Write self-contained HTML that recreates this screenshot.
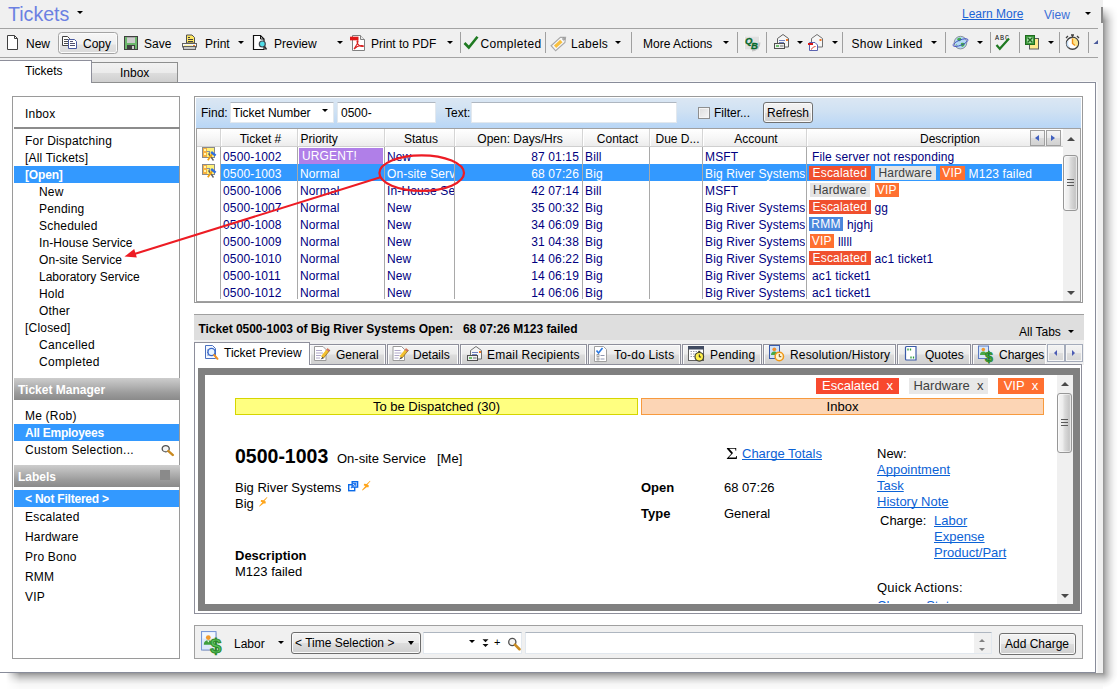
<!DOCTYPE html>
<html>
<head>
<meta charset="utf-8">
<title>Tickets</title>
<style>
html,body{margin:0;padding:0;background:#fff;}
body{width:1119px;height:689px;overflow:hidden;position:relative;font-family:"Liberation Sans",sans-serif;font-size:12px;color:#000;}
.abs{position:absolute;}
#win{position:absolute;left:0;top:0;width:1103px;height:673px;background:#f0f0f0;overflow:hidden;}
.t{position:absolute;white-space:nowrap;line-height:14px;height:14px;}
.vsep{position:absolute;width:1px;background:#a0a0a0;top:32px;height:21px;}
.dd{position:absolute;width:0;height:0;margin-left:.3px;border-left:3.2px solid transparent;border-right:3.2px solid transparent;border-top:3.7px solid #000;}
.lp{position:absolute;left:25px;white-space:nowrap;line-height:14px;height:14px;letter-spacing:.2px;}
.lp.i{left:39px;}
.sel{position:absolute;left:14px;width:165px;background:#3399ff;}
.hdr{position:absolute;left:14px;width:166px;background:linear-gradient(#cdcdcd,#b4b4b4 35%,#9a9a9a 70%,#8a8a8a);color:#fff;font-weight:bold;}
.inp{box-sizing:border-box;background:#fff;border:1px solid #e2e8ee;border-top-color:#aeb6c0;}
.btn{box-sizing:border-box;border:1px solid #707070;border-radius:3px;background:linear-gradient(#f3f3f3,#ebebeb 50%,#dddddd 51%,#cfcfcf);box-shadow:inset 0 0 0 1px #fafafa;}
.ctr{text-align:center;padding-left:3px;box-sizing:border-box;}
.hs{top:129px;width:1px;height:17px;background:#d5d5d5;box-shadow:1px 0 0 #fff;}
.g{color:#000080;letter-spacing:.14px;}
.g.s{color:#fff;}
.tag{display:inline-block;height:14px;line-height:14px;padding:0;text-align:center;margin-right:4px;vertical-align:top;margin-top:-1px;letter-spacing:.2px;}
.tE{width:61.5px;}.tH{width:60.5px;margin-left:.5px;}.tV{width:24.5px;margin-left:.5px;}.tR{width:34px;}
.tE{background:#f0502e;color:#fff;}
.tH{background:#e4e4e4;color:#404040;}
.tV{background:#ff7030;color:#fff;}
.tR{background:#4a87dc;color:#fff;}
.sbtn{box-sizing:border-box;border:1px solid #a0a0a0;background:linear-gradient(#f6f6f6,#e9e9e9 50%,#dcdcdc 51%,#d2d2d2);}
.thumb{box-sizing:border-box;border:1px solid #979797;border-radius:3px;background:linear-gradient(90deg,#f6f6f6 0,#ededed 35%,#dadada 52%,#c6c6c6 85%,#d2d2d2);box-shadow:inset 0 0 0 1px rgba(255,255,255,.5);}
.dtab{top:344px;height:20px;box-sizing:border-box;border:1px solid #8e8f9b;border-bottom:none;background:linear-gradient(#f3f3f3,#ebebeb 48%,#dddddd 52%,#d0d0d0);box-shadow:inset 1px 1px 0 #fbfbfb,inset -1px 0 0 #fbfbfb;}
.navb{top:344px;width:18px;height:18px;box-sizing:border-box;border:1px solid #a4abba;background:linear-gradient(#f3f3f3,#ececec 48%,#dedede 52%,#d6d6d6);box-shadow:inset 0 0 0 1px #f6f6f6;}
.ptag{height:16px;line-height:16px;text-align:center;white-space:nowrap;}
.p{font-size:13px;line-height:16px;height:16px;}
a{color:#0b62d6;text-decoration:underline;text-decoration-skip-ink:none;}
</style>
</head>
<body>
<div id="win">

<!-- ===== title bar ===== -->
<div class="t" style="left:8px;top:2px;font-size:19.6px;line-height:24px;height:24px;color:#6b80e2;">Tickets</div>
<div class="dd" style="left:77px;top:11px;"></div>
<div class="t" style="left:962px;top:7px;color:#1a63d6;text-decoration:underline;">Learn More</div>
<div class="t" style="left:1044px;top:8px;color:#3a6fd8;">View</div>
<div class="dd" style="left:1085px;top:12px;"></div>
<div class="abs" style="left:0;top:28px;width:1098px;height:1px;background:#a3a3a3;"></div>
<div class="abs" style="left:0;top:57px;width:1098px;height:1px;background:#a3a3a3;"></div>

<!-- ===== toolbar ===== -->
<div id="tb">
<div class="t" style="left:26px;top:37px;">New</div>
<div class="abs" style="left:58px;top:32px;width:60px;height:22px;border:1px solid #a4a4a4;border-radius:3.5px;background:linear-gradient(#f6f6f6,#f0f0f0 55%,#e2e2e2 60%,#dadada);box-shadow:inset 0 0 0 1px #fbfbfb;box-sizing:border-box;"></div>
<div class="t" style="left:83px;top:37px;">Copy</div>
<div class="t" style="left:144px;top:37px;">Save</div>
<div class="t" style="left:205px;top:37px;">Print</div>
<div class="dd" style="left:237.8px;top:41px;"></div>
<div class="t" style="left:274px;top:37px;">Preview</div>
<div class="dd" style="left:337px;top:41px;"></div>
<div class="t" style="left:371px;top:37px;">Print to PDF</div>
<div class="dd" style="left:447px;top:41px;"></div>
<div class="vsep" style="left:460px;"></div>
<div class="t" style="left:480.5px;top:37px;letter-spacing:.33px;">Completed</div>
<div class="vsep" style="left:545px;"></div>
<div class="t" style="left:571px;top:37px;letter-spacing:.3px;">Labels</div>
<div class="dd" style="left:615px;top:41px;"></div>
<div class="vsep" style="left:631px;"></div>
<div class="t" style="left:643px;top:37px;">More Actions</div>
<div class="dd" style="left:723px;top:41px;"></div>
<div class="vsep" style="left:737px;"></div>
<div class="vsep" style="left:766px;"></div>
<div class="dd" style="left:797px;top:41px;"></div>
<div class="dd" style="left:832px;top:41px;"></div>
<div class="vsep" style="left:842px;"></div>
<div class="t" style="left:851.5px;top:37px;letter-spacing:.23px;">Show Linked</div>
<div class="dd" style="left:931px;top:41px;"></div>
<div class="vsep" style="left:945px;"></div>
<div class="dd" style="left:977px;top:41px;"></div>
<div class="vsep" style="left:990px;"></div>
<div class="vsep" style="left:1019px;"></div>
<div class="dd" style="left:1048px;top:41px;"></div>
<div class="vsep" style="left:1059px;"></div>
<div class="vsep" style="left:1088px;"></div>
</div>

<!-- ===== main tabs + white page ===== -->
<div class="abs" style="left:0;top:82px;width:1096px;height:591px;background:#fff;border:1px solid #888c9a;border-left:none;box-sizing:border-box;box-shadow:1.5px 0 0 #fbfbfb,0 -1px 0 #f8f8f8;"></div>
<div class="abs" style="left:91px;top:62px;width:87px;height:21px;box-sizing:border-box;border:1px solid #8e8f8f;background:linear-gradient(#f2f2f2,#ebebeb 50%,#dddddd 51%,#cfcfcf);"></div>
<div class="t" style="left:120px;top:66px;">Inbox</div>
<div class="abs" style="left:0;top:60px;width:92px;height:23px;box-sizing:border-box;border-top:1px solid #8e8f9b;border-right:1px solid #8e8f9b;background:#fff;"></div>
<div class="t" style="left:25px;top:64px;">Tickets</div>

<!-- ===== left panel ===== -->
<div id="left">
<div class="abs" style="left:12px;top:96px;width:168px;height:563px;box-sizing:border-box;border:1px solid #9a9a9a;background:#fff;"></div>
<div class="lp" style="top:107px;">Inbox</div>
<div class="abs" style="left:14px;top:127px;width:166px;height:2px;background:#8c8c8c;"></div>
<div class="lp" style="top:134px;">For Dispatching</div>
<div class="lp" style="top:151px;">[All Tickets]</div>
<div class="sel" style="top:166px;height:17px;"></div>
<div class="lp" style="top:168px;color:#fff;font-weight:bold;letter-spacing:-.17px;">[Open]</div>
<div class="lp i" style="top:185px;">New</div>
<div class="lp i" style="top:202px;">Pending</div>
<div class="lp i" style="top:219px;">Scheduled</div>
<div class="lp i" style="top:236px;letter-spacing:0.1px;">In-House Service</div>
<div class="lp i" style="top:253px;letter-spacing:0.06px;">On-site Service</div>
<div class="lp i" style="top:270px;letter-spacing:0px;">Laboratory Service</div>
<div class="lp i" style="top:287px;">Hold</div>
<div class="lp i" style="top:304px;">Other</div>
<div class="lp" style="top:321px;">[Closed]</div>
<div class="lp i" style="top:338px;letter-spacing:0.3px;">Cancelled</div>
<div class="lp i" style="top:355px;letter-spacing:0.3px;">Completed</div>

<div class="hdr" style="top:378px;height:22px;"></div>
<div class="t" style="left:18px;top:383px;color:#fff;font-weight:bold;">Ticket Manager</div>
<div class="lp" style="top:409px;">Me (Rob)</div>
<div class="sel" style="top:424px;height:17px;"></div>
<div class="lp" style="top:426px;color:#fff;font-weight:bold;letter-spacing:-.24px;">All Employees</div>
<div class="lp" style="top:443px;letter-spacing:.25px;">Custom Selection...</div>

<div class="hdr" style="top:465px;height:22px;"></div>
<div class="t" style="left:18px;top:470px;color:#fff;font-weight:bold;">Labels</div>
<div class="abs" style="left:160px;top:470px;width:10px;height:10px;background:#8a8a8a;"></div>
<div class="sel" style="top:490px;height:17px;"></div>
<div class="lp" style="top:492px;color:#fff;font-weight:bold;letter-spacing:-.22px;">&lt; Not Filtered &gt;</div>
<div class="lp" style="top:510px;">Escalated</div>
<div class="lp" style="top:530px;">Hardware</div>
<div class="lp" style="top:550px;">Pro Bono</div>
<div class="lp" style="top:570px;">RMM</div>
<div class="lp" style="top:590px;">VIP</div>
</div>

<!-- ===== find panel / grid ===== -->
<div id="grid">
<div class="abs" style="left:194px;top:96px;width:889px;height:207px;box-sizing:border-box;border:1px solid #9a9a9a;background:#fff;"></div>
<div class="abs" style="left:196px;top:128px;width:885px;height:174px;box-sizing:border-box;border:1px solid #a0a0a0;"></div>
<div class="abs" style="left:196px;top:98px;width:885px;height:30px;background:linear-gradient(#dbe7f3,#cfe1f3 45%,#b8d6f6);"></div>
<div class="t" style="left:201px;top:106px;">Find:</div>
<div class="abs inp" style="left:230px;top:102px;width:104px;height:21px;"></div>
<div class="t" style="left:233px;top:106px;">Ticket Number</div>
<div class="dd" style="left:322px;top:109px;"></div>
<div class="abs inp" style="left:337px;top:102px;width:99px;height:21px;"></div>
<div class="t" style="left:341px;top:106px;">0500-</div>
<div class="t" style="left:445px;top:106px;">Text:</div>
<div class="abs inp" style="left:471px;top:102px;width:206px;height:21px;"></div>
<div class="abs" style="left:698px;top:107px;width:12px;height:12px;box-sizing:border-box;border:1px solid #8e8f8f;background:linear-gradient(135deg,#dcdcdc,#f6f6f6);box-shadow:inset 0 0 0 1px #f4f4f4;"></div>
<div class="t" style="left:714px;top:106px;">Filter...</div>
<div class="abs btn" style="left:763px;top:102px;width:50px;height:21px;"></div>
<div class="t" style="left:767px;top:106px;">Refresh</div>
<!-- header -->
<div class="abs" style="left:197px;top:128px;width:866px;height:19px;background:linear-gradient(#ffffff,#f7f7f7 50%,#ececec);border-top:1px solid #a0a0a0;border-bottom:1px solid #cfcfcf;box-sizing:border-box;"></div>

<div class="abs hs" style="left:220px;"></div>
<div class="abs hs" style="left:297px;"></div>
<div class="t ctr" style="left:221px;width:76px;top:132px;">Ticket #</div>
<div class="abs hs" style="left:384px;"></div>
<div class="t" style="left:300.5px;top:132px;">Priority</div>
<div class="abs hs" style="left:454px;"></div>
<div class="t ctr" style="left:385px;width:69px;top:132px;">Status</div>
<div class="abs hs" style="left:582px;"></div>
<div class="t ctr" style="left:455px;width:127px;top:132px;">Open: Days/Hrs</div>
<div class="abs hs" style="left:649px;"></div>
<div class="t ctr" style="left:583px;width:66px;top:132px;">Contact</div>
<div class="abs hs" style="left:702px;"></div>
<div class="t ctr" style="left:650px;width:52px;top:132px;">Due D...</div>
<div class="abs hs" style="left:806px;"></div>
<div class="t ctr" style="left:703px;width:103px;top:132px;">Account</div>
<div class="t ctr" style="left:807px;width:283px;top:132px;">Description</div>
<div class="abs" style="left:299px;top:148px;width:84px;height:16px;background:#b07fe8;"></div>
<div class="t g" style="left:223px;top:149.5px;">0500-1002</div>
<div class="t g s" style="left:302px;top:148.5px;">URGENT!</div>
<div class="t g" style="left:387px;top:149.5px;width:67px;overflow:hidden;">New</div>
<div class="t g" style="left:455px;width:124px;text-align:right;top:149.5px;">87 01:15</div>
<div class="t g" style="left:585px;top:149.5px;">Bill</div>
<div class="t g" style="left:705px;top:149.5px;width:100px;overflow:hidden;">MSFT</div>
<div class="t g" style="left:812px;top:149.5px;">File server not responding</div>
<div class="abs" style="left:221px;top:164px;width:841px;height:17px;background:#3399ff;"></div>
<div class="t g s" style="left:223px;top:166.5px;">0500-1003</div>
<div class="t g s" style="left:300px;top:166.5px;">Normal</div>
<div class="t g s" style="left:387px;top:166.5px;width:67px;overflow:hidden;">On-site Serv</div>
<div class="t g s" style="left:455px;width:124px;text-align:right;top:166.5px;">68 07:26</div>
<div class="t g s" style="left:585px;top:166.5px;">Big</div>
<div class="t g s" style="left:705px;top:166.5px;width:100px;overflow:hidden;">Big River Systems</div>
<div class="t g s" style="left:809px;top:166.5px;"><span class="tag tE">Escalated</span><span class="tag tH">Hardware</span><span class="tag tV">VIP</span>M123 failed</div>
<div class="t g" style="left:223px;top:183.5px;">0500-1006</div>
<div class="t g" style="left:300px;top:183.5px;">Normal</div>
<div class="t g" style="left:387px;top:183.5px;width:67px;overflow:hidden;">In-House Se</div>
<div class="t g" style="left:455px;width:124px;text-align:right;top:183.5px;">42 07:14</div>
<div class="t g" style="left:585px;top:183.5px;">Bill</div>
<div class="t g" style="left:705px;top:183.5px;width:100px;overflow:hidden;">MSFT</div>
<div class="t g" style="left:809px;top:183.5px;"><span class="tag tH">Hardware</span><span class="tag tV">VIP</span></div>
<div class="t g" style="left:223px;top:200.5px;">0500-1007</div>
<div class="t g" style="left:300px;top:200.5px;">Normal</div>
<div class="t g" style="left:387px;top:200.5px;width:67px;overflow:hidden;">New</div>
<div class="t g" style="left:455px;width:124px;text-align:right;top:200.5px;">35 00:32</div>
<div class="t g" style="left:585px;top:200.5px;">Big</div>
<div class="t g" style="left:705px;top:200.5px;width:100px;overflow:hidden;">Big River Systems</div>
<div class="t g" style="left:809px;top:200.5px;"><span class="tag tE">Escalated</span>gg</div>
<div class="t g" style="left:223px;top:217.5px;">0500-1008</div>
<div class="t g" style="left:300px;top:217.5px;">Normal</div>
<div class="t g" style="left:387px;top:217.5px;width:67px;overflow:hidden;">New</div>
<div class="t g" style="left:455px;width:124px;text-align:right;top:217.5px;">34 06:09</div>
<div class="t g" style="left:585px;top:217.5px;">Big</div>
<div class="t g" style="left:705px;top:217.5px;width:100px;overflow:hidden;">Big River Systems</div>
<div class="t g" style="left:809px;top:217.5px;"><span class="tag tR">RMM</span>hjghj</div>
<div class="t g" style="left:223px;top:234.5px;">0500-1009</div>
<div class="t g" style="left:300px;top:234.5px;">Normal</div>
<div class="t g" style="left:387px;top:234.5px;width:67px;overflow:hidden;">New</div>
<div class="t g" style="left:455px;width:124px;text-align:right;top:234.5px;">31 04:38</div>
<div class="t g" style="left:585px;top:234.5px;">Big</div>
<div class="t g" style="left:705px;top:234.5px;width:100px;overflow:hidden;">Big River Systems</div>
<div class="t g" style="left:809px;top:234.5px;"><span class="tag tV">VIP</span>lllll</div>
<div class="t g" style="left:223px;top:251.5px;">0500-1010</div>
<div class="t g" style="left:300px;top:251.5px;">Normal</div>
<div class="t g" style="left:387px;top:251.5px;width:67px;overflow:hidden;">New</div>
<div class="t g" style="left:455px;width:124px;text-align:right;top:251.5px;">14 06:22</div>
<div class="t g" style="left:585px;top:251.5px;">Big</div>
<div class="t g" style="left:705px;top:251.5px;width:100px;overflow:hidden;">Big River Systems</div>
<div class="t g" style="left:809px;top:251.5px;"><span class="tag tE">Escalated</span>ac1 ticket1</div>
<div class="t g" style="left:223px;top:268.5px;">0500-1011</div>
<div class="t g" style="left:300px;top:268.5px;">Normal</div>
<div class="t g" style="left:387px;top:268.5px;width:67px;overflow:hidden;">New</div>
<div class="t g" style="left:455px;width:124px;text-align:right;top:268.5px;">14 06:19</div>
<div class="t g" style="left:585px;top:268.5px;">Big</div>
<div class="t g" style="left:705px;top:268.5px;width:100px;overflow:hidden;">Big River Systems</div>
<div class="t g" style="left:812px;top:268.5px;">ac1 ticket1</div>
<div class="t g" style="left:223px;top:285.5px;">0500-1012</div>
<div class="t g" style="left:300px;top:285.5px;">Normal</div>
<div class="t g" style="left:387px;top:285.5px;width:67px;overflow:hidden;">New</div>
<div class="t g" style="left:455px;width:124px;text-align:right;top:285.5px;">14 06:06</div>
<div class="t g" style="left:585px;top:285.5px;">Big</div>
<div class="t g" style="left:705px;top:285.5px;width:100px;overflow:hidden;">Big River Systems</div>
<div class="t g" style="left:812px;top:285.5px;">ac1 ticket1</div>
<div class="abs" style="left:220px;top:147px;width:1px;height:152px;background:#a9a9a9;"></div>
<div class="abs" style="left:297px;top:147px;width:1px;height:152px;background:#a9a9a9;"></div>
<div class="abs" style="left:384px;top:147px;width:1px;height:152px;background:#a9a9a9;"></div>
<div class="abs" style="left:454px;top:147px;width:1px;height:152px;background:#a9a9a9;"></div>
<div class="abs" style="left:582px;top:147px;width:1px;height:152px;background:#a9a9a9;"></div>
<div class="abs" style="left:649px;top:147px;width:1px;height:152px;background:#a9a9a9;"></div>
<div class="abs" style="left:702px;top:147px;width:1px;height:152px;background:#a9a9a9;"></div>
<div class="abs" style="left:806px;top:147px;width:1px;height:152px;background:#a9a9a9;"></div>
<!-- header scroll arrows -->
<div class="abs sbtn" style="left:1030px;top:130px;width:15px;height:16px;"></div>
<div class="abs sbtn" style="left:1046px;top:130px;width:15px;height:16px;"></div>
<div class="abs" style="left:1035px;top:135px;border-top:3px solid transparent;border-bottom:3px solid transparent;border-right:4px solid #3f5fbf;width:0;height:0;"></div>
<div class="abs" style="left:1051px;top:135px;border-top:3px solid transparent;border-bottom:3px solid transparent;border-left:4px solid #3f5fbf;width:0;height:0;"></div>
<!-- v scrollbar -->
<div class="abs" style="left:1063px;top:129px;width:17px;height:172px;background:#f0f0f0;"></div>
<div class="abs" style="left:1067px;top:137px;border-left:4px solid transparent;border-right:4px solid transparent;border-bottom:4px solid #4a4a4a;width:0;height:0;"></div>
<div class="abs" style="left:1067px;top:291px;border-left:4px solid transparent;border-right:4px solid transparent;border-top:4px solid #4a4a4a;width:0;height:0;"></div>
<div class="abs thumb" style="left:1063px;top:155px;width:15px;height:56px;"></div>
<div class="abs" style="left:1067px;top:179px;width:7px;height:1px;background:#5a5a5a;box-shadow:0 3px 0 #5a5a5a,0 6px 0 #5a5a5a;"></div>
</div>

<!-- ===== ticket detail ===== -->
<div id="detail">
<!-- heading bar -->
<div class="abs" style="left:194px;top:314px;width:890px;height:26px;background:#dedede;border-top:1px solid #a0a0a0;box-sizing:border-box;"></div>
<div class="t" style="left:198.5px;top:322px;font-weight:bold;letter-spacing:-.045px;">Ticket 0500-1003 of Big River Systems Open:&nbsp;&nbsp; 68 07:26 M123 failed</div>
<div class="t" style="left:1019px;top:325px;">All Tabs</div>
<div class="dd" style="left:1068px;top:330px;"></div>
<!-- tab strip -->
<div class="abs" style="left:194px;top:340px;width:890px;height:25px;background:#f0f0f0;"></div>
<div class="abs" style="left:194px;top:364px;width:888px;height:250px;box-sizing:border-box;border:1px solid #8e8f9b;background:#fff;"></div>
<div class="abs dtab" style="left:309px;width:77px;"></div><div class="t" style="left:336px;top:348px;">General</div>
<div class="abs dtab" style="left:387px;width:72px;"></div><div class="t" style="left:413px;top:348px;">Details</div>
<div class="abs dtab" style="left:460px;width:127px;"></div><div class="t" style="left:487px;top:348px;letter-spacing:0.21px;">Email Recipients</div>
<div class="abs dtab" style="left:588px;width:93px;"></div><div class="t" style="left:614px;top:348px;letter-spacing:0.21px;">To-do Lists</div>
<div class="abs dtab" style="left:682px;width:80px;"></div><div class="t" style="left:710px;top:348px;letter-spacing:0.17px;">Pending</div>
<div class="abs dtab" style="left:763px;width:133px;"></div><div class="t" style="left:790px;top:348px;letter-spacing:0.16px;">Resolution/History</div>
<div class="abs dtab" style="left:897px;width:74px;"></div><div class="t" style="left:925px;top:348px;">Quotes</div>
<div class="abs dtab" style="left:972px;width:74px;border-right:none;"></div><div class="t" style="left:999px;top:348px;width:47px;overflow:hidden;">Charges</div>
<div class="abs navb" style="left:1047px;"></div>
<div class="abs navb" style="left:1065px;"></div>
<div class="abs" style="left:1046px;top:340px;width:1px;height:24px;background:#f0f0f0;"></div>
<div class="abs" style="left:1054px;top:349.500px;border-top:3px solid transparent;border-bottom:3px solid transparent;border-right:3.500px solid #4c5cb4;width:0;height:0;"></div>
<div class="abs" style="left:1072px;top:349.500px;border-top:3px solid transparent;border-bottom:3px solid transparent;border-left:3.500px solid #4c5cb4;width:0;height:0;"></div>
<div class="abs" style="left:194px;top:342px;width:116px;height:23px;box-sizing:border-box;border:1px solid #8e8f9b;border-bottom:none;background:#fff;"></div>
<div class="t" style="left:224px;top:346px;">Ticket Preview</div>
<!-- preview frame -->
<div class="abs" style="left:198px;top:368px;width:882px;height:243px;box-sizing:border-box;border:7px solid #808080;background:#fff;"></div>
<div id="pv" class="abs" style="left:205px;top:375px;width:852px;height:228px;overflow:hidden;font-size:13px;">
  <div class="abs ptag" style="left:611px;top:3px;width:83px;background:#f8492e;color:#fff;">Escalated&nbsp; x</div>
  <div class="abs ptag" style="left:704px;top:3px;width:79px;background:#e8e8e8;color:#404040;">Hardware&nbsp; x</div>
  <div class="abs ptag" style="left:793px;top:3px;width:46px;background:#ff6f30;color:#fff;">VIP&nbsp; x</div>
  <div class="abs" style="left:30px;top:23px;width:403px;height:17px;box-sizing:border-box;border:1px solid #d6d600;background:#ffff80;text-align:center;line-height:15px;">To be Dispatched (30)</div>
  <div class="abs" style="left:436px;top:23px;width:403px;height:17px;box-sizing:border-box;border:1px solid #f79a3e;background:#fcd5b5;text-align:center;line-height:15px;">Inbox</div>
  <div class="t" style="left:30px;top:69px;font-size:19.5px;font-weight:bold;line-height:24px;height:24px;">0500-1003</div>
  <div class="t p" style="left:132px;top:76px;">On-site Service</div>
  <div class="t p" style="left:232px;top:76px;">[Me]</div>
  <div class="t p" style="left:30px;top:105px;">Big River Systems</div>
  <div class="t p" style="left:30px;top:121px;">Big</div>
  <div class="t p" style="left:30px;top:173px;font-weight:bold;">Description</div>
  <div class="t p" style="left:30px;top:189px;">M123 failed</div>
  <div class="t" style="left:520.5px;top:70px;font-family:'Liberation Serif',serif;font-size:17px;line-height:18px;height:18px;transform:scaleX(1.22);transform-origin:0 0;">&Sigma;</div>
  <div class="t p" style="left:537px;top:71px;"><a>Charge Totals</a></div>
  <div class="t p" style="left:436px;top:105px;font-weight:bold;">Open</div>
  <div class="t p" style="left:519px;top:105px;">68 07:26</div>
  <div class="t p" style="left:436px;top:131px;font-weight:bold;">Type</div>
  <div class="t p" style="left:519px;top:131px;">General</div>
  <div class="t p" style="left:672px;top:71px;">New:</div>
  <div class="t p" style="left:672px;top:87px;"><a>Appointment</a></div>
  <div class="t p" style="left:672px;top:103px;"><a>Task</a></div>
  <div class="t p" style="left:672px;top:119px;"><a>History Note</a></div>
  <div class="t p" style="left:675px;top:138px;">Charge:</div>
  <div class="t p" style="left:729px;top:138px;"><a>Labor</a></div>
  <div class="t p" style="left:729px;top:154px;"><a>Expense</a></div>
  <div class="t p" style="left:729px;top:170px;"><a>Product/Part</a></div>
  <div class="t p" style="left:672px;top:205px;letter-spacing:.25px;">Quick Actions:</div>
  <div class="t p" style="left:672px;top:223px;"><a>Change Status</a></div>
</div>
<!-- preview scrollbar -->
<div class="abs" style="left:1057px;top:375px;width:16px;height:229px;background:#f0f0f0;"></div>
<div class="abs" style="left:1061px;top:382px;border-left:4px solid transparent;border-right:4px solid transparent;border-bottom:4px solid #4a4a4a;width:0;height:0;"></div>
<div class="abs" style="left:1061px;top:594px;border-left:4px solid transparent;border-right:4px solid transparent;border-top:4px solid #4a4a4a;width:0;height:0;"></div>
<div class="abs thumb" style="left:1057px;top:393px;width:15px;height:60px;"></div>
<div class="abs" style="left:1061px;top:419px;width:7px;height:1px;background:#5a5a5a;box-shadow:0 3px 0 #5a5a5a,0 6px 0 #5a5a5a;"></div>
</div>

<!-- ===== charge bar ===== -->
<div id="charge">
<div class="abs" style="left:194px;top:625px;width:889px;height:34px;box-sizing:border-box;border:1px solid #a0a0a0;background:#f0f0f0;"></div>
<div class="t" style="left:234px;top:637px;">Labor</div>
<div class="dd" style="left:278px;top:641px;"></div>
<div class="abs btn" style="left:291px;top:632px;width:130px;height:22px;border-color:#6c6c6c;"></div>
<div class="t" style="left:295px;top:636px;">&lt; Time Selection &gt;</div>
<div class="dd" style="left:408px;top:641px;border-left-width:3.6px;border-right-width:3.6px;border-top-width:4px;"></div>
<div class="abs inp" style="left:423px;top:632px;width:99px;height:22px;"></div>
<div class="dd" style="left:469px;top:640px;border-left-width:3px;border-right-width:3px;border-top-width:3.5px;"></div>
<div class="t" style="left:494px;top:635px;font-size:11px;">+</div>
<div class="abs inp" style="left:525px;top:632px;width:467px;height:22px;"></div>
<div class="abs" style="left:974px;top:633px;width:17px;height:20px;background:#f0f0f0;"></div>
<div class="abs" style="left:979px;top:639px;border-left:3.5px solid transparent;border-right:3.5px solid transparent;border-bottom:3.5px solid #808080;width:0;height:0;"></div>
<div class="abs" style="left:979px;top:647.5px;border-left:3.5px solid transparent;border-right:3.5px solid transparent;border-top:3.5px solid #808080;width:0;height:0;"></div>
<div class="abs btn" style="left:999px;top:632.5px;width:77px;height:22px;"></div>
<div class="t" style="left:1005px;top:637px;">Add Charge</div>
</div>

<!-- ===== icons overlay ===== -->
<svg class="abs" style="left:0;top:0;" width="1103" height="672" viewBox="0 0 1103 672">
<defs>
<g id="rowico">
 <rect x="0.5" y="0.5" width="12" height="10" fill="#fff27a" stroke="#8a8a8a"/>
 <rect x="1" y="1" width="4" height="9" fill="#f6b040"/>
 <rect x="2" y="2" width="2" height="2" fill="#fff6b0"/><rect x="2" y="6" width="2" height="2" fill="#fff6b0"/>
 <path d="M4.5,4.5 h3 v3" fill="none" stroke="#8890a0" stroke-width="1.2"/>
 <path d="M6.5,6.5 L11.5,13.5" stroke="#606060" stroke-width="1.3"/>
 <path d="M5.8,13.2 L11,6" stroke="#f0a010" stroke-width="1.8"/>
 <path d="M9.2,5 L13.6,8.6" stroke="#2f6fe0" stroke-width="2.4"/>
</g>
<g id="mag">
 <circle cx="4" cy="4" r="3" fill="#f4f4f4" stroke="#505050" stroke-width="1.1"/>
 <path d="M6.2,6.2 L10,10" stroke="#c98a20" stroke-width="2.2" stroke-linecap="round"/>
</g>
<g id="bolt"><path d="M6,0 L1,5 L4,5 L0,10 L8,4 L5,4 L9,0 Z" fill="#f5a81c" transform="scale(0.85)"/></g>
</defs>
<!-- New -->
<path d="M7.5,35.5 h7 l3,3 v11 h-10 z" fill="#fff" stroke="#404040"/><path d="M14.5,35.5 v3 h3" fill="none" stroke="#404040"/>
<!-- Copy -->
<path d="M62.5,36.5 h5 l2,2 v7 h-7 z" fill="#fff" stroke="#404040"/>
<path d="M64,39.5 h4 M64,41.5 h4 M64,43.5 h4" stroke="#505050"/>
<path d="M68.5,39.5 h6 l2,2 v7 h-8 z" fill="#fff" stroke="#4a5aa0"/>
<path d="M70,43.5 h5 M70,45.5 h5 M70,41.5 h3" stroke="#505070"/>
<!-- Save -->
<rect x="124.500" y="36.500" width="13" height="13" fill="#6db86d" stroke="#404040"/>
<rect x="127" y="37" width="8" height="6" fill="#cdcdcd"/><rect x="127" y="37" width="8" height="1" fill="#aaaaaa"/>
<rect x="127" y="45" width="8" height="5" fill="#404040"/><rect x="132" y="46" width="2" height="3" fill="#d0d0d0"/>
<!-- Print -->
<path d="M186.500,43 v-8 h5.500 l2.500,2.500 v5.500 z" fill="#ffe760" stroke="#505050"/>
<path d="M188,37.500 h2 M188,39.500 h5 M188,41.500 h5" stroke="#404040"/>
<rect x="182.500" y="43.500" width="14" height="3.500" fill="#f4f4f4" stroke="#606060"/>
<rect x="183.500" y="46.500" width="12" height="3" fill="#c8c8c8" stroke="#606060"/>
<rect x="193" y="45" width="2" height="1" fill="#f08020"/><rect x="184" y="45" width="8" height="1" fill="#fff4a0"/>
<!-- Preview -->
<path d="M253.500,35.500 h7 l3.500,3.500 v10.500 h-10.500 z" fill="#fff" stroke="#101010" stroke-width="1.2"/><path d="M260.500,35.500 v3.500 h3.500" fill="none" stroke="#101010"/>
<circle cx="262.300" cy="44" r="3" fill="#4fdde8" stroke="#404850" stroke-width="1.2"/><path d="M264.500,46.500 L266.500,49.500" stroke="#303030" stroke-width="1.6"/>
<!-- PDF -->
<path d="M352.500,35.500 h8 l4,4 v11 h-12 z" fill="#fff" stroke="#808080"/><path d="M360.500,35.500 v4 h4" fill="#e8e8e8" stroke="#808080"/>
<rect x="350" y="36.700" width="8.500" height="3.600" fill="#e01818"/>
<path d="M354,49 C356,46 358,43 358,41.500 C358,40.300 357,40.500 357,41.500 C357,44 360,47 363,46.500 C364,46.200 363,45.300 361,45.500 C358,45.800 355.500,47.500 354,49 Z" fill="none" stroke="#d82020" stroke-width="1.1"/>
<!-- Completed check -->
<path d="M464.500,43 L468.800,47.500 L477.500,36.800" fill="none" stroke="#1f7a22" stroke-width="2.6"/>
<!-- Labels tag -->
<g transform="translate(559.7,42.6) rotate(-42) scale(1.13)"><path d="M-7.500,-3 h11 l3.500,3 l-3.500,3 h-11 z" fill="#f8f8f8" stroke="#a8a8a8"/><rect x="-5.500" y="-1.500" width="7.500" height="3" fill="#f8c040"/><circle cx="4.800" cy="0" r="1" fill="#c0c0c0" stroke="#888" stroke-width=".6"/></g>
<!-- QB -->
<rect x="744" y="35.500" width="16" height="15" fill="#e0e0e0"/><rect x="744.500" y="36" width="15" height="14" fill="none" stroke="#f6f6f6"/><path d="M752,50.500 a8,8 0 0 0 7.500,-8" fill="none" stroke="#c6c6c6" stroke-width="2"/>
<text x="745" y="44" font-family="Liberation Sans" font-weight="bold" font-style="italic" font-size="9.500" fill="#076a2c" stroke="#076a2c" stroke-width=".3">Q</text>
<text x="751" y="48.500" font-family="Liberation Sans" font-weight="bold" font-style="italic" font-size="9.500" fill="#076a2c" stroke="#076a2c" stroke-width=".3">B</text>
<!-- Envelope + card -->
<path d="M777.500,38.500 l5.500,-4 l5.500,4 v8.500 h-11 z" fill="#f6f6f6" stroke="#606060"/><path d="M779,40.500 h6 M779,42.500 h5" stroke="#7080c0"/><rect x="786" y="39" width="2" height="2" fill="#f07828"/>
<rect x="774.500" y="43.500" width="10" height="5" fill="#f0f0f0" stroke="#505050"/><rect x="776" y="45" width="3" height="2" fill="#70c070"/><path d="M780,46 h3.500" stroke="#707070"/>
<!-- Envelope + pdf -->
<path d="M811.500,38.500 l5.500,-4 l5.500,4 v8.500 h-11 z" fill="#f6f6f6" stroke="#707070"/><rect x="819.500" y="39" width="2" height="2" fill="#f07828"/>
<path d="M809.500,42.500 h5.500 l2.500,2.500 v5.500 h-8 z" fill="#fff" stroke="#5a62b0"/><rect x="808" y="43" width="5" height="2" fill="#d81818"/><path d="M811,49.500 c2,-2 3,-3 4.500,-3" stroke="#d83020" fill="none"/>
<!-- Globe -->
<circle cx="960.500" cy="42.600" r="6.300" fill="#b4d8f4" stroke="#8a929a"/>
<path d="M957,39 q2,-2 4,-1 q1,2 -1,3 q-2,1 -3,-2 z M961,43 q3,-1 4,1 q-1,3 -3,3 q-2,-2 -1,-4 z M956,44 q1,0 1.500,2 q-1,0 -1.500,-2z" fill="#48b048"/>
<ellipse cx="960.500" cy="42.600" rx="8" ry="2.600" fill="none" stroke="#3844c0" stroke-width=".8" transform="rotate(-22 960.500 42.600)"/>
<!-- ABC check -->
<text x="995" y="40" font-family="Liberation Mono" font-size="6.800" fill="#101010" textLength="14" lengthAdjust="spacing">ABC</text>
<path d="M996.500,45 L999.800,48.800 L1009,38.500" fill="none" stroke="#1f7a22" stroke-width="2.200"/>
<!-- Excel -->
<rect x="1029.500" y="38.500" width="9" height="10.500" fill="#ffe98c" stroke="#5a5a5a"/>
<rect x="1025.500" y="35.500" width="9" height="9" fill="#3a9a3a" stroke="#1f6a1f"/>
<rect x="1027" y="37" width="6" height="6" fill="#a8dca8"/><path d="M1027.500,37.500 L1032.500,42.500 M1032.500,37.500 L1027.500,42.500" stroke="#1f6a1f" stroke-width="1.400"/>
<!-- Stopwatch -->
<circle cx="1072.500" cy="43.200" r="6" fill="#fff" stroke="#404040" stroke-width="1.400"/>
<path d="M1072.500,43.200 v-5.500 a5.500,5.500 0 0 1 4.200,9 z" fill="#ffe58a"/>
<path d="M1072.500,38.500 v5 l2.500,2" fill="none" stroke="#f09018" stroke-width="1.400"/>
<path d="M1066,38 l2,-2 M1079,38 l-2,-2 M1072.500,37 v-2 M1071,35 h3" stroke="#404040" stroke-width="1.300"/>
<path d="M1068,41 a5,5 0 0 0 1,6" stroke="#c4dcf4" stroke-width="1.500" fill="none"/>
<!-- toolbar overflow -->
<path d="M1098,40 v4 h-4.500 z" fill="#4a5a9a"/>
<!-- detail tab icons -->
<g id="tpico">
<path d="M205.500,345.500 h7 l3,3 v10 h-10 z" fill="#f4f8ff" stroke="#4a70c0"/>
<path d="M207,350 h2 M207,352.500 h2 M207,355 h2" stroke="#7a90c8"/>
<circle cx="211.500" cy="352" r="3.600" fill="#e8f4ff" stroke="#3a68c8" stroke-width="1.400"/>
<path d="M214.200,355 L217.500,358.800" stroke="#f09020" stroke-width="2" stroke-linecap="round"/>
</g>
<defs><g id="pgpen">
<path d="M0.500,0.500 h8.500 l3,3 v11 h-11.500 z" fill="#fff" stroke="#9a9a9a"/>
<path d="M2,4.500 h6 M2,7 h7 M2,9.500 h5 M2,12 h4" stroke="#b0a8c8"/>
<path d="M14.800,3.200 L8.200,11.200" stroke="#f2c030" stroke-width="3.200"/>
<path d="M14.800,3.200 L13.500,4.800" stroke="#d07070" stroke-width="3.200"/>
<path d="M8.600,10.700 L6.600,13.600 L9.800,12.200 z" fill="#404040"/>
<path d="M15.900,4.200 L9.500,12.100" stroke="#806020" stroke-width=".7"/>
</g></defs>
<use href="#pgpen" x="314" y="346"/><use href="#pgpen" x="392.500" y="346"/>
<!-- email recipients -->
<path d="M470.500,350.500 l5.500,-4 l5.500,4 v8.500 h-11 z" fill="#f6f6f6" stroke="#707070"/><path d="M472,352.500 h6 M472,354.500 h5" stroke="#7080c0"/><rect x="479" y="351" width="2" height="2" fill="#f07828"/>
<rect x="467.500" y="355.500" width="10" height="5" fill="#f0f0f0" stroke="#505050"/><rect x="469" y="357" width="3" height="2" fill="#70c070"/><path d="M473,358 h3.500" stroke="#707070"/>
<!-- to-do -->
<path d="M594.500,346.500 h9 l3,3 v12 h-12 z" fill="#fff" stroke="#a0a0a0"/>
<path d="M596.500,350.500 l2,2.500 l4,-5" fill="none" stroke="#2a78e0" stroke-width="1.600"/>
<rect x="597" y="354.500" width="2" height="2" fill="none" stroke="#909090" stroke-width=".8"/><rect x="597" y="358" width="2" height="2" fill="none" stroke="#909090" stroke-width=".8"/>
<path d="M600.500,355.500 h4 M600.500,359 h4" stroke="#9098b0"/>
<!-- pending -->
<rect x="688.500" y="346.500" width="15" height="14" fill="#fff" stroke="#606060"/>
<rect x="688" y="346" width="16" height="3.500" fill="#404a60"/>
<path d="M690.500,351.500 h10 M690.500,354 h10 M690.500,356.500 h5" stroke="#9a9aa8" stroke-dasharray="1.500,1"/>
<circle cx="699.300" cy="356.800" r="4.300" fill="#fff04a" stroke="#404030" stroke-width="1.200"/>
<path d="M699.300,354.500 v2.500 h1.800" fill="none" stroke="#202020" stroke-width="1"/>
<rect x="698.300" y="350.800" width="2" height="1.700" fill="#404030"/>
<!-- resolution/history -->
<rect x="769.500" y="345.500" width="10" height="13" fill="#cfe2fa" stroke="#3a5aa8"/>
<circle cx="774.300" cy="349.300" r="1.900" fill="#f09030"/><path d="M771,355 q0,-3.500 3.300,-3.500 q3.300,0 3.300,3.500 z" fill="#48a848"/>
<circle cx="779.300" cy="356.500" r="4.200" fill="#fff4d0" stroke="#f09818" stroke-width="1.500"/>
<path d="M779.300,354 v2.700 h2" fill="none" stroke="#805010" stroke-width="1"/>
<!-- quotes -->
<path d="M906.500,346.500 h9.500 v13.500 h-9.500 q-1,0 -1,-1 v-11.500 q0,-1 1,-1 z" fill="#fff" stroke="#3a5aa8" stroke-width="1.200"/>
<path d="M908,348.500 v2 M910.500,348.500 v2 M911,356.500 v2 M913.500,356.500 v2" stroke="#2a9a3a" stroke-width="1.300"/>
<!-- charges tab icon -->
<defs><g id="chg">
<rect x="0.500" y="0.500" width="10" height="12.500" fill="#d6e6fa" stroke="#5a7ac0"/>
<circle cx="5.300" cy="4" r="1.800" fill="#f09830"/><path d="M2,9.500 q0,-3.500 3.300,-3.500 q3.300,0 3.300,3.500 z" fill="#48a848"/>
</g></defs>
<use href="#chg" x="978" y="345.500"/>
<text x="985" y="362" font-family="Liberation Sans" font-weight="bold" font-size="14" fill="#3aa83a" stroke="#1f7a22" stroke-width=".7">$</text>
<!-- charge bar icon -->
<rect x="202.500" y="632.500" width="14.500" height="18.500" fill="#b0a8a0" opacity=".55"/>
<rect x="201.500" y="631.500" width="14.500" height="18.500" fill="#dce9fb" stroke="#7a98d8"/>
<rect x="202.500" y="632.500" width="12.500" height="6" fill="#f2f7ff"/>
<circle cx="208.300" cy="637.600" r="2.400" fill="#f29a2e"/><path d="M203.800,644.800 q0,-4.600 4.500,-4.600 q4.500,0 4.500,4.600 z" fill="#3f9f3f"/><path d="M207.200,640.600 l1.100,1.800 l1.100,-1.800 z" fill="#fff"/>
<text x="210.300" y="653.300" font-family="Liberation Sans" font-weight="bold" font-size="20" fill="#5cc45c" stroke="#2a8a2a" stroke-width="1">$</text>
<!-- preview small icons -->
<defs><g id="lnk"><rect x="0.700" y="3.700" width="6" height="6" fill="#fff" stroke="#0a6ae8" stroke-width="1.400"/><rect x="4.200" y="0.700" width="5.400" height="5.400" fill="#fff" stroke="#0a6ae8" stroke-width="1.400"/><path d="M3,7.200 L7.600,2.600 M5,2.400 h2.800 v2.800" fill="none" stroke="#2a7af0" stroke-width="1.200"/></g></defs>
<use href="#lnk" x="348" y="481"/>
<defs><g id="bolt2"><path d="M8,0 L4.600,3.200 L2,3 L1.800,4.800 L3.400,5.200 L0,9.200 L0.600,9.600 L4.600,6.400 L6.600,6.400 L6.800,4.400 L5.400,4 L8.400,0.400 Z" fill="#ffa51a"/></g></defs>
<use href="#bolt2" x="362" y="480.800"/><use href="#bolt2" x="259" y="497"/>
<!-- grid row icons -->
<use href="#rowico" x="202" y="147"/><use href="#rowico" x="202" y="164"/>
<!-- left panel custom selection magnifier -->
<use href="#mag" transform="translate(161,444.5) scale(1.18,1.05)"/>
<!-- charge bar magnifier -->
<use href="#mag" transform="translate(507.5,637.2) scale(1.2)"/>
<path d="M482.500,639.300 h6 l-3,3 z M482.500,644 h6 l-3,3 z" fill="#101010"/>
</svg>
<!-- red annotation -->
<svg class="abs" style="left:0;top:0;" width="1103" height="672" viewBox="0 0 1103 672">
<ellipse cx="421.7" cy="173.1" rx="42.3" ry="17.8" fill="none" stroke="#ed1c24" stroke-width="2.2"/>
<line x1="380.5" y1="177.2" x2="132" y2="254.8" stroke="#ed1c24" stroke-width="2"/>
<polygon points="124.5,256.6 134.2,249.0 136.8,257.4" fill="#ed1c24"/>
</svg>
</div>
<!-- drop shadow -->
<div class="abs" style="left:1103px;top:6px;width:16px;height:667px;background:linear-gradient(to right,rgba(0,0,0,.43),rgba(0,0,0,.27) 3px,rgba(0,0,0,.13) 7px,rgba(0,0,0,.04) 11px,rgba(0,0,0,0) 15px);-webkit-mask-image:linear-gradient(to bottom,transparent 0,#000 15px);mask-image:linear-gradient(to bottom,transparent 0,#000 15px);"></div>
<div class="abs" style="left:6px;top:673px;width:1097px;height:16px;background:linear-gradient(to bottom,rgba(0,0,0,.41),rgba(0,0,0,.27) 3px,rgba(0,0,0,.13) 7px,rgba(0,0,0,.04) 11px,rgba(0,0,0,.015) 16px);-webkit-mask-image:linear-gradient(to right,transparent 0,#000 14px);mask-image:linear-gradient(to right,transparent 0,#000 14px);"></div>
<div class="abs" style="left:1103px;top:673px;width:16px;height:16px;background:radial-gradient(circle at 0 0,rgba(0,0,0,.42),rgba(0,0,0,.27) 3px,rgba(0,0,0,.13) 7px,rgba(0,0,0,.04) 11px,rgba(0,0,0,0) 15px);"></div>
<div class="abs" style="left:1101px;top:7px;width:2px;height:16px;background:#888;"></div>
</body>
</html>
